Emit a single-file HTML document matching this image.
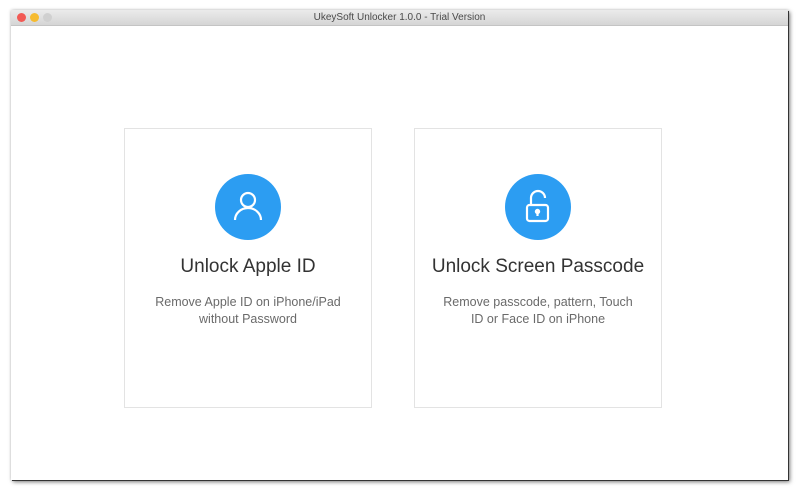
<!DOCTYPE html>
<html><head><style>
body{margin:0;width:800px;height:491px;background:#fff;position:relative;overflow:hidden;font-family:"Liberation Sans",sans-serif}
.win{position:absolute;left:11px;top:10px;width:777px;height:470px;background:#fff;box-shadow:1px 1px 0 #333,2px 2px 4px rgba(0,0,0,.5),0 0 3px rgba(0,0,0,.2);}
.tb{height:15px;background:linear-gradient(#ebebeb,#d5d5d5);border-bottom:1px solid #c4c4c4;text-align:center;font-size:10px;line-height:15px;color:#4a4a4a}
.dot{position:absolute;top:3px;width:9px;height:9px;border-radius:50%}
.card{position:absolute;top:128px;width:246px;height:278px;border:1px solid #e3e3e3;text-align:center}
.circ{position:absolute;left:90px;top:45px;width:66px;height:66px;border-radius:50%;background:#2c9df2}
.t{position:absolute;top:127px;left:0;right:0;font-size:19px;color:#333}
.d{position:absolute;top:165px;left:0;right:0;font-size:12.5px;line-height:17px;color:#6a6a6a}
</style></head><body>
<div class="win">
<div class="tb">UkeySoft Unlocker 1.0.0 - Trial Version</div>
<div class="dot" style="left:6px;background:#f25a55"></div>
<div class="dot" style="left:19px;background:#f6bb30"></div>
<div class="dot" style="left:32px;background:#d0d0d0"></div>
</div>
<div class="card" style="left:124px">
<div class="circ"><svg width="66" height="66" viewBox="0 0 66 66" fill="none" stroke="#fff" stroke-width="2.2"><circle cx="33" cy="26" r="7"/><path d="M20 46a13 12 0 0 1 26 0"/></svg></div>
<div class="t">Unlock Apple ID</div>
<div class="d">Remove Apple ID on iPhone/iPad<br>without Password</div>
</div>
<div class="card" style="left:414px">
<div class="circ"><svg width="66" height="66" viewBox="0 0 66 66" fill="none" stroke="#fff" stroke-width="2.2"><path d="M26 31v-7a7 7 0 0 1 14 0"/><rect x="22" y="31" width="21" height="16" rx="2.5"/><circle cx="32.5" cy="37.5" r="1.6" fill="#fff"/><path d="M32.5 38v4"/></svg></div>
<div class="t">Unlock Screen Passcode</div>
<div class="d">Remove passcode, pattern, Touch<br>ID or Face ID on iPhone</div>
</div>
</body></html>
